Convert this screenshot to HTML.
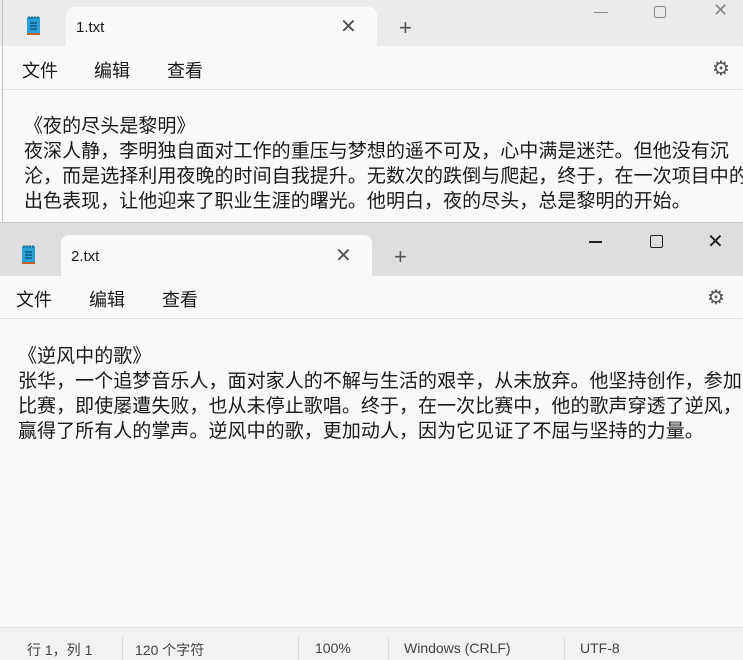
<!DOCTYPE html>
<html><head><meta charset="utf-8"><style>
*{margin:0;padding:0;box-sizing:border-box}
body{width:743px;height:660px;overflow:hidden;background:#f9f9f9;font-family:"Liberation Sans","Noto Sans CJK SC",sans-serif;color:#1a1a1a;position:relative}
.abs{position:absolute}
.t{white-space:nowrap;font-size:19px;letter-spacing:0.05px}
.menu{font-size:18px}
.ctl{color:#555}
</style></head><body>
<!-- window 1 -->
<div class="abs" style="left:0;top:0;width:743px;height:46px;background:#ebebeb"></div>
<div class="abs" style="left:2px;top:0;width:1px;height:222px;background:#c8c8c8"></div>
<div class="abs" style="left:66px;top:7px;width:311px;height:40px;background:#f9f9f9;border-radius:8px 8px 0 0"></div>
<svg class="abs" style="left:24px;top:14px" width="20" height="24" viewBox="0 0 20 24"><rect x="3" y="3" width="13" height="17" rx="1.5" fill="#2a9fd8"/><rect x="3" y="19" width="13" height="2" fill="#c0602a"/><path d="M5 2v3M8 2v3M11 2v3M14 2v3" stroke="#156" stroke-width="1"/><path d="M6 9h7M6 12h7M6 15h7" stroke="#0b4a70" stroke-width="1.2"/></svg>
<div class="abs" style="left:76px;top:19px;font-size:15px">1.txt</div>
<div class="abs ctl" style="left:340px;top:14px;font-size:20px">✕</div>
<div class="abs ctl" style="left:399px;top:15px;font-size:22px;font-weight:300">+</div>
<div class="abs" style="left:594px;top:12px;width:14px;height:1px;background:#888"></div>
<div class="abs" style="left:654px;top:6px;width:12px;height:12px;border:1px solid #888;border-radius:2px"></div>
<div class="abs" style="left:713px;top:0px;font-size:18px;color:#888">✕</div>
<div class="abs menu" style="left:22px;top:57px">文件</div>
<div class="abs menu" style="left:94px;top:57px">编辑</div>
<div class="abs menu" style="left:167px;top:57px">查看</div>
<div class="abs ctl" style="left:712px;top:56px;font-size:20px">⚙</div>
<div class="abs" style="left:3px;top:89px;width:740px;height:1px;background:#e3e3e3"></div>
<div class="abs t" style="left:24px;top:111px">《夜的尽头是黎明》</div>
<div class="abs t" style="left:24px;top:136px">夜深人静，李明独自面对工作的重压与梦想的遥不可及，心中满是迷茫。但他没有沉</div>
<div class="abs t" style="left:24px;top:161px">沦，而是选择利用夜晚的时间自我提升。无数次的跌倒与爬起，终于，在一次项目中的</div>
<div class="abs t" style="left:24px;top:186px">出色表现，让他迎来了职业生涯的曙光。他明白，夜的尽头，总是黎明的开始。</div>
<!-- window 2 -->
<div class="abs" style="left:0;top:222px;width:743px;height:54px;background:#dedee0;border-top:1px solid #c8c8c8"></div>
<div class="abs" style="left:61px;top:235px;width:311px;height:41px;background:#f9f9f9;border-radius:8px 8px 0 0"></div>
<svg class="abs" style="left:19px;top:243px" width="20" height="24" viewBox="0 0 20 24"><rect x="3" y="3" width="13" height="17" rx="1.5" fill="#2a9fd8"/><rect x="3" y="19" width="13" height="2" fill="#c0602a"/><path d="M5 2v3M8 2v3M11 2v3M14 2v3" stroke="#156" stroke-width="1"/><path d="M6 9h7M6 12h7M6 15h7" stroke="#0b4a70" stroke-width="1.2"/></svg>
<div class="abs" style="left:71px;top:248px;font-size:15px">2.txt</div>
<div class="abs ctl" style="left:335px;top:243px;font-size:20px">✕</div>
<div class="abs ctl" style="left:394px;top:244px;font-size:22px;font-weight:300">+</div>
<div class="abs" style="left:589px;top:241px;width:13px;height:2px;background:#222"></div>
<div class="abs" style="left:650px;top:235px;width:13px;height:13px;border:1.5px solid #222;border-radius:2px"></div>
<div class="abs" style="left:707px;top:229px;font-size:20px;color:#222">✕</div>
<div class="abs menu" style="left:16px;top:286px">文件</div>
<div class="abs menu" style="left:89px;top:286px">编辑</div>
<div class="abs menu" style="left:162px;top:286px">查看</div>
<div class="abs ctl" style="left:707px;top:285px;font-size:20px">⚙</div>
<div class="abs" style="left:0;top:318px;width:743px;height:1px;background:#e3e3e3"></div>
<div class="abs t" style="left:18px;top:341px">《逆风中的歌》</div>
<div class="abs t" style="left:18px;top:366px">张华，一个追梦音乐人，面对家人的不解与生活的艰辛，从未放弃。他坚持创作，参加</div>
<div class="abs t" style="left:18px;top:391px">比赛，即使屡遭失败，也从未停止歌唱。终于，在一次比赛中，他的歌声穿透了逆风，</div>
<div class="abs t" style="left:18px;top:416px">赢得了所有人的掌声。逆风中的歌，更加动人，因为它见证了不屈与坚持的力量。</div>
<!-- status -->
<div class="abs" style="left:0;top:627px;width:743px;height:33px;background:#f3f1f1;border-top:1px solid #e2e2e2"></div>
<div class="abs" style="left:27px;top:640px;font-size:14px;color:#444">行 1，列 1</div>
<div class="abs" style="left:122px;top:636px;width:1px;height:24px;background:#ddd"></div>
<div class="abs" style="left:135px;top:640px;font-size:14px;color:#444">120 个字符</div>
<div class="abs" style="left:298px;top:636px;width:1px;height:24px;background:#ddd"></div>
<div class="abs" style="left:315px;top:640px;font-size:14px;color:#444">100%</div>
<div class="abs" style="left:388px;top:636px;width:1px;height:24px;background:#ddd"></div>
<div class="abs" style="left:404px;top:640px;font-size:14px;color:#444">Windows (CRLF)</div>
<div class="abs" style="left:564px;top:636px;width:1px;height:24px;background:#ddd"></div>
<div class="abs" style="left:580px;top:640px;font-size:14px;color:#444">UTF-8</div>
</body></html>
